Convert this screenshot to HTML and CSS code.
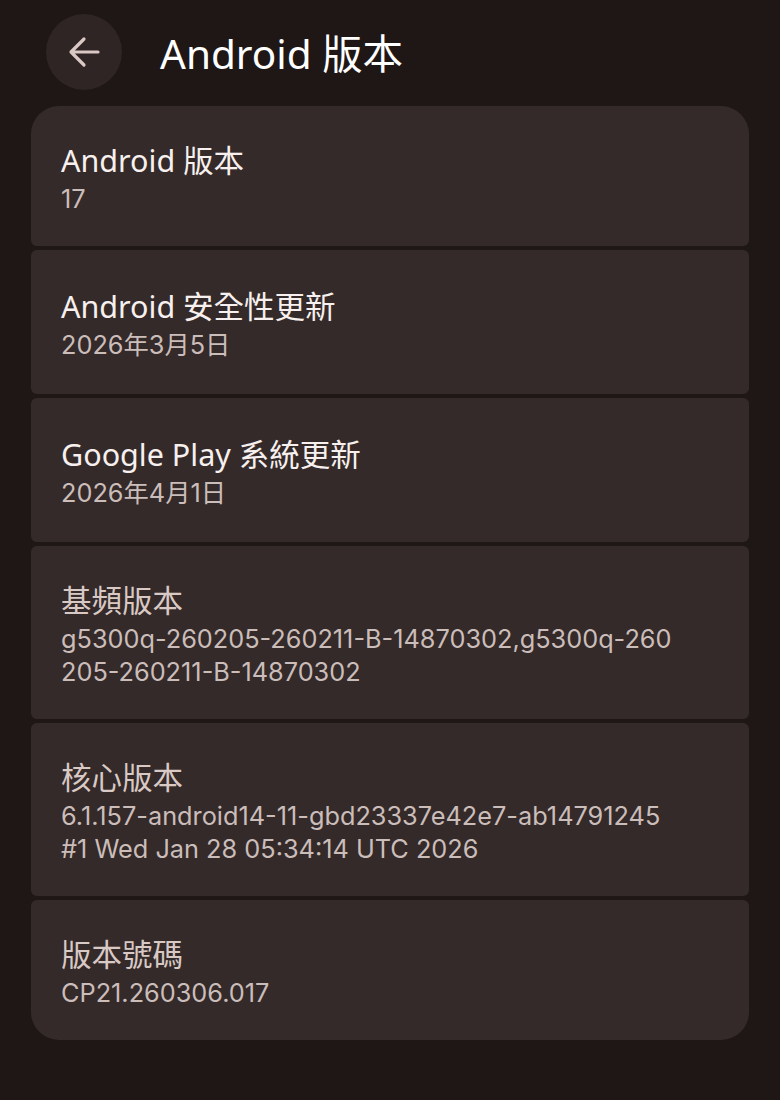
FILE: index.html
```html
<!DOCTYPE html>
<html>
<head>
  <meta charset="utf-8">
  <title>Android 版本</title>
  <link rel="stylesheet" href="styles.css">
</head>
<body>
  <!-- Top bar -->
  <div class="top-bar">
    <button class="back-btn" aria-label="返回">
      <svg width="34" height="34" viewBox="0 0 34 34">
        <path d="M31 17H4M17 4L4 17L17 30" fill="none" stroke="#d9c8c4" stroke-width="3.2" stroke-linecap="round" stroke-linejoin="round"/>
      </svg>
    </button>
    <h1 class="page-title">Android 版本</h1>
  </div>

  <!-- Version info list -->
  <div class="list">
    <div class="item short">
      <div class="item-title">Android 版本</div>
      <div class="item-sub">17</div>
    </div>
    <div class="item">
      <div class="item-title">Android 安全性更新</div>
      <div class="item-sub">2026年3月5日</div>
    </div>
    <div class="item">
      <div class="item-title">Google Play 系統更新</div>
      <div class="item-sub">2026年4月1日</div>
    </div>
    <div class="item tall">
      <div class="item-title muted">基頻版本</div>
      <div class="item-sub">g5300q-260205-260211-B-14870302,g5300q-260<br>205-260211-B-14870302</div>
    </div>
    <div class="item tall">
      <div class="item-title muted">核心版本</div>
      <div class="item-sub">6.1.157-android14-11-gbd23337e42e7-ab14791245<br>#1 Wed Jan 28 05:34:14 UTC 2026</div>
    </div>
    <div class="item short">
      <div class="item-title muted">版本號碼</div>
      <div class="item-sub">CP21.260306.017</div>
    </div>
  </div>
</body>
</html>
```

FILE: styles.css
```css
body {
  margin: 0;
  background-color: #1f1716;
  font-family: "Noto Sans", "Noto Sans CJK TC", sans-serif;
  color: #f5eeec;
}

/* Top bar */
.top-bar {
  display: flex;
  align-items: center;
  height: 106px;
  padding-left: 46px;
  box-sizing: border-box;
}

.back-btn {
  width: 76px;
  height: 76px;
  border-radius: 50%;
  border: none;
  background-color: #2e2524;
  display: flex;
  align-items: center;
  justify-content: center;
  padding: 0;
  margin-top: -2px;
  cursor: pointer;
}

.page-title {
  font-size: 40.5px;
  font-weight: 400;
  margin: -4px 0 0 38px;
  color: #ffffff;
}

/* List of cards */
.list {
  display: flex;
  flex-direction: column;
  gap: 4px;
  margin: 0 31px;
  border-radius: 28px;
  overflow: hidden;
}

.item {
  background-color: #342a29;
  border-radius: 6px;
  height: 144px;
  box-sizing: border-box;
  padding: 4px 30px 0;
  display: flex;
  flex-direction: column;
  justify-content: center;
}

.item.short { height: 140px; }
.item.tall { height: 173px; }

.item-title {
  font-size: 30.5px;
  line-height: 38px;
  color: #f7f0ee;
}

.item-title.muted {
  color: #d9c9c5;
}

/* digits in the reference are wide, Inter is closer than Noto here */
.item-sub {
  font-family: Inter, "Noto Sans CJK TC", sans-serif;
  font-size: 25.3px;
  line-height: 33px;
  margin-top: 3px;
  color: #cbbdba;
}
```
